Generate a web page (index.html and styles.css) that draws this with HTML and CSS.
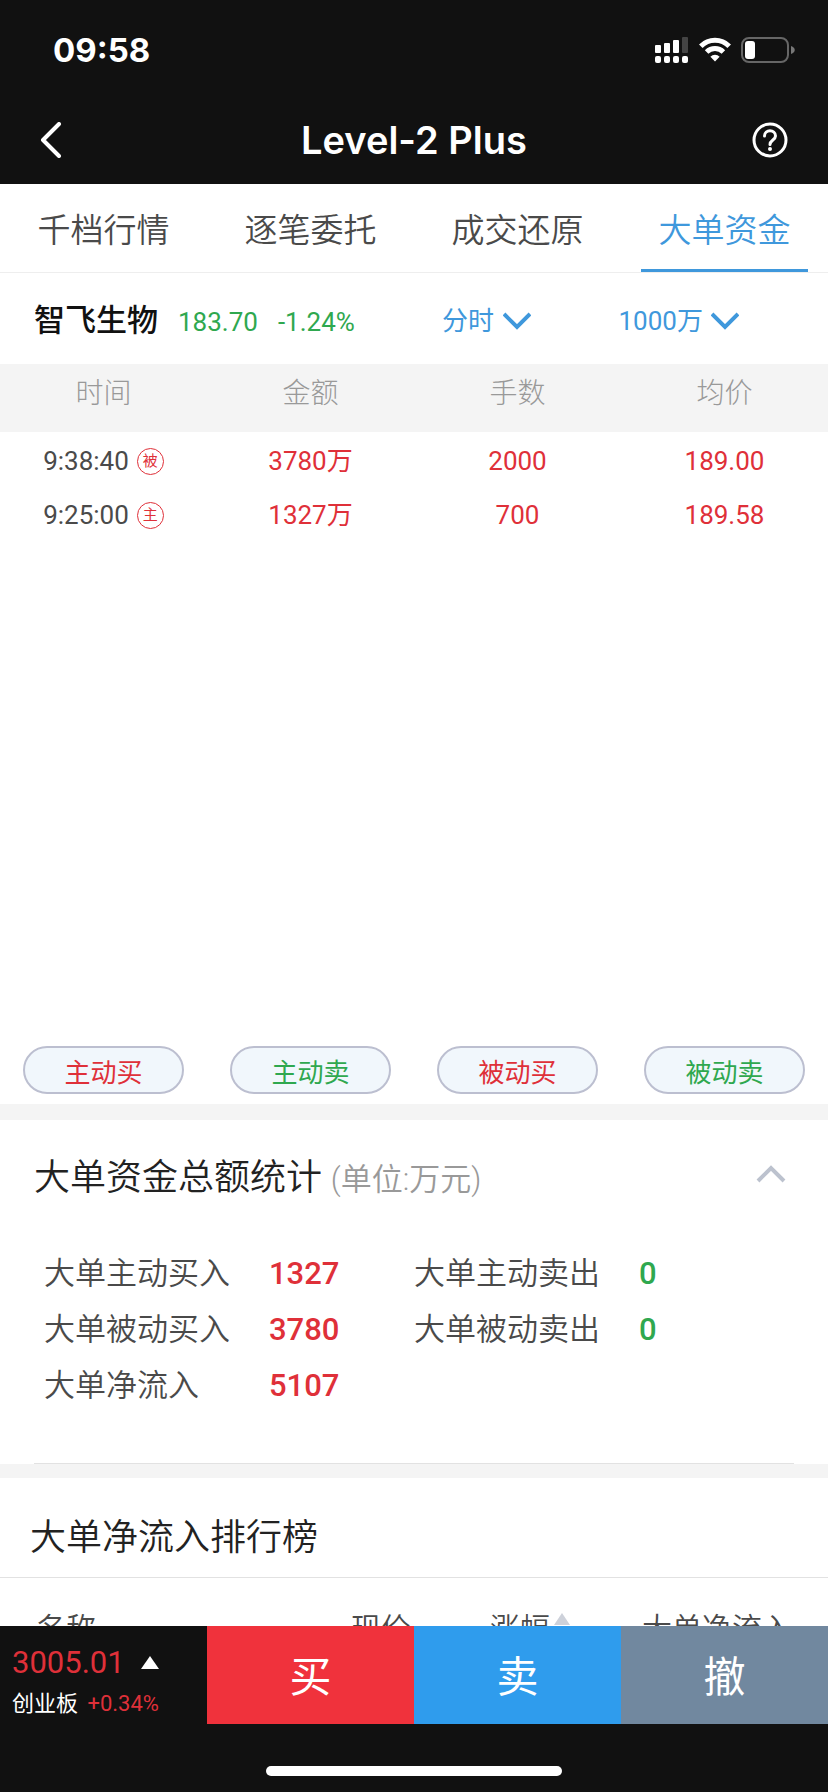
FILE: index.html
```html
<!DOCTYPE html>
<html lang="zh-CN">
<head>
  <meta charset="utf-8">
  <meta name="viewport" content="width=device-width, initial-scale=1">
  <title>Level-2 Plus</title>
  <link rel="stylesheet" href="styles.css">
</head>
<body>
  <header class="header">
    <div class="status-bar">
      <span class="clock">09:58</span>
      <div class="status-icons">
        <svg width="34" height="26" viewBox="0 0 34 26" fill="#fff">
          <rect x="0" y="8" width="6" height="8" rx="1"/>
          <rect x="9" y="6" width="6" height="10" rx="1"/>
          <rect x="18" y="3" width="6" height="13" rx="1"/>
          <rect x="27" y="0" width="6" height="16" rx="1" fill="#444"/>
          <rect x="0" y="19" width="6" height="7" rx="2"/>
          <rect x="9" y="19" width="6" height="7" rx="2"/>
          <rect x="18" y="19" width="6" height="7" rx="2"/>
          <rect x="27" y="19" width="6" height="7" rx="2"/>
        </svg>
        <svg width="32" height="26" viewBox="0 0 32 26" fill="none" stroke="#fff" stroke-width="5">
          <path d="M1.8 9.2a20 20 0 0 1 28.4 0"/>
          <path d="M7.6 15a12 12 0 0 1 16.8 0"/>
          <path d="M16 24.5l-4.6-4.8a6.6 6.6 0 0 1 9.2 0z" fill="#fff" stroke="none"/>
        </svg>
        <svg width="54" height="26" viewBox="0 0 54 26">
          <rect x="1" y="1" width="46" height="24" rx="7" fill="none" stroke="#666" stroke-width="2"/>
          <rect x="4" y="4" width="10" height="18" rx="3" fill="#fff"/>
          <path d="M50 9c5 1.500 5 6.500 0 8z" fill="#777"/>
        </svg>
      </div>
    </div>
    <div class="nav-bar">
      <button class="icon-btn" aria-label="返回">
        <svg width="22" height="36" viewBox="0 0 22 36" fill="none" stroke="#fff" stroke-width="4" stroke-linecap="round" stroke-linejoin="round">
          <path d="M19 2L3 18l16 16"/>
        </svg>
      </button>
      <h1 class="title">Level-2 Plus</h1>
      <button class="icon-btn" aria-label="帮助">
        <svg width="36" height="36" viewBox="0 0 36 36" fill="none" stroke="#fff" stroke-width="3" stroke-linecap="round">
          <circle cx="18" cy="18" r="16"/>
          <path d="M12.500 14c0-7 11-7 11 0 0 4-5.500 4-5.500 8.500"/>
          <circle cx="18" cy="27" r="1" stroke-width="2"/>
        </svg>
      </button>
    </div>
  </header>

  <nav class="tabs">
    <a href="#" class="tab">千档行情</a>
    <a href="#" class="tab">逐笔委托</a>
    <a href="#" class="tab">成交还原</a>
    <a href="#" class="tab active">大单资金</a>
  </nav>

  <main>
    <div class="stock-row">
      <div class="stock">
        <strong class="stock-name">智飞生物</strong>
        <span class="green">183.70</span>
        <span class="green">-1.24%</span>
      </div>
      <div class="picker">
        <select aria-label="周期"><option>分时</option></select>
        <svg width="28" height="18" viewBox="0 0 28 18" fill="none" stroke="#3f98dc" stroke-width="4"><path d="M1 2l13 13L27 2"/></svg>
      </div>
      <div class="picker">
        <select aria-label="大单金额"><option>1000万</option></select>
        <svg width="28" height="18" viewBox="0 0 28 18" fill="none" stroke="#3f98dc" stroke-width="4"><path d="M1 2l13 13L27 2"/></svg>
      </div>
    </div>

    <div class="records">
      <table class="records-table">
        <thead>
          <tr><th>时间</th><th>金额</th><th>手数</th><th>均价</th></tr>
        </thead>
        <tbody>
          <tr>
            <td><div class="time">9:38:40<span class="mark">被</span></div></td>
            <td class="red">3780万</td>
            <td class="red">2000</td>
            <td class="red">189.00</td>
          </tr>
          <tr>
            <td><div class="time">9:25:00<span class="mark">主</span></div></td>
            <td class="red">1327万</td>
            <td class="red">700</td>
            <td class="red">189.58</td>
          </tr>
        </tbody>
      </table>
    </div>

    <div class="filters">
      <button class="filter red">主动买</button>
      <button class="filter green">主动卖</button>
      <button class="filter red">被动买</button>
      <button class="filter green">被动卖</button>
    </div>

    <section class="summary">
      <div class="section-head">
        <h2>大单资金总额统计 <small>(单位:万元)</small></h2>
        <button class="icon-btn" aria-label="收起">
          <svg width="30" height="18" viewBox="0 0 30 18" fill="none" stroke="#bcc2ce" stroke-width="4"><path d="M2 16L15 3l13 13"/></svg>
        </button>
      </div>
      <dl class="stats">
        <dt>大单主动买入</dt><dd class="red">1327</dd>
        <dt>大单主动卖出</dt><dd class="green">0</dd>
        <dt>大单被动买入</dt><dd class="red">3780</dd>
        <dt>大单被动卖出</dt><dd class="green">0</dd>
        <dt>大单净流入</dt><dd class="red">5107</dd>
      </dl>
    </section>

    <section class="ranking">
      <h2>大单净流入排行榜</h2>
      <table class="ranking-table">
        <thead>
          <tr>
            <th class="col-name">名称</th>
            <th class="col-price">现价</th>
            <th class="col-change">涨幅<svg class="sort" width="16" height="12" viewBox="0 0 16 12" fill="#cdd1da"><path d="M8 0l8 12H0z"/></svg></th>
            <th class="col-flow">大单净流入</th>
          </tr>
        </thead>
      </table>
    </section>
  </main>

  <footer class="footer">
    <div class="trade-bar">
      <div class="index">
        <div class="index-price">3005.01
          <svg width="18" height="13" viewBox="0 0 18 13" fill="#fff"><path d="M9 0l9 13H0z"/></svg>
        </div>
        <div class="index-info">创业板 <span>+0.34%</span></div>
      </div>
      <button class="trade buy">买</button>
      <button class="trade sell">卖</button>
      <button class="trade cancel">撤</button>
    </div>
    <div class="home-indicator"></div>
  </footer>
</body>
</html>
```
FILE: styles.css
```css
:root {
  --dark: #111111;
  --red: #df3039;
  --green: #2fa84f;
  --blue: #3f98dc;
  --surface: #f4f4f4;
  --border: #e2e2e2;
  --text: #4a4a4a;
}

* {
  box-sizing: border-box;
}

body {
  margin: 0;
  background: #fff;
  color: var(--text);
  font-family: Roboto, "Noto Sans CJK SC", sans-serif;
  font-size: 26px;
}

button,
select {
  font: inherit;
  color: inherit;
  background: none;
  border: none;
  padding: 0;
  margin: 0;
  cursor: pointer;
}

svg {
  display: block;
  flex: none;
}

.red {
  color: var(--red);
}

.green {
  color: var(--green);
}

/* Header */
.header {
  background: var(--dark);
  color: #fff;
  font-family: Inter, sans-serif;
}

.status-bar {
  height: 96px;
  padding: 4px 33px 0 53px;
  display: flex;
  align-items: center;
  justify-content: space-between;
}

.clock {
  font-size: 33px;
  font-weight: 700;
}

.status-icons {
  display: flex;
  gap: 10px;
}

.nav-bar {
  height: 88px;
  padding: 0 40px;
  display: grid;
  grid-template-columns: 36px 1fr 36px;
  align-items: center;
}

.title {
  margin: 0;
  text-align: center;
  font-size: 38px;
  font-weight: 600;
}

/* Tabs */
.tabs {
  display: grid;
  grid-template-columns: repeat(4, 1fr);
  border-bottom: 1px solid #eee;
}

.tab {
  height: 88px;
  margin: 0 20px;
  line-height: 94px;
  text-align: center;
  font-size: 33px;
  font-weight: 350;
  color: var(--text);
  text-decoration: none;
  white-space: nowrap;
}

.tab.active {
  color: var(--blue);
  border-bottom: 3px solid var(--blue);
}

/* Stock row */
.stock-row {
  height: 91px;
  padding: 4px 0 0 34px;
  display: grid;
  grid-template-columns: 37fr 16fr 19fr;
  align-items: center;
}

.stock {
  display: flex;
  align-items: baseline;
  gap: 20px;
}

.stock-name {
  font-size: 31px;
  line-height: 44px;
  font-weight: 500;
  color: #111;
}

.picker {
  display: flex;
  align-items: center;
  gap: 8px;
  color: var(--blue);
}

.picker select {
  appearance: none;
}

/* Records */
.records {
  min-height: 676px;
}

.records-table,
.ranking-table {
  width: 100%;
  table-layout: fixed;
  border-collapse: collapse;
}

.records-table th {
  height: 68px;
  padding: 0 0 14px;
  background: var(--surface);
  color: #999;
  font-size: 28px;
  font-weight: 300;
}

.records-table td {
  height: 54px;
  padding: 4px 0 0;
  line-height: 30px;
  text-align: center;
}

.time {
  display: flex;
  align-items: center;
  justify-content: center;
  gap: 8px;
}

.mark {
  width: 27px;
  height: 27px;
  border: 1px solid var(--red);
  border-radius: 50%;
  color: var(--red);
  font-size: 15px;
  line-height: 25px;
}

/* Filters */
.filters {
  display: grid;
  grid-template-columns: repeat(4, 1fr);
  padding: 6px 0 10px;
}

.filter {
  height: 48px;
  margin: 0 23px;
  background: #f1f7fc;
  border: 2px solid #bcbfd0;
  border-radius: 24px;
}

/* Summary */
.summary {
  border-top: 16px solid var(--surface);
  border-bottom: 14px solid var(--surface);
}

.section-head {
  padding: 0 42px 0 34px;
  height: 108px;
  display: flex;
  align-items: center;
  justify-content: space-between;
}

h2 {
  margin: 0;
  font-size: 36px;
  font-weight: 350;
  color: #222;
}

h2 small {
  font-size: 31px;
  color: #999;
}

.stats {
  margin: 0 34px;
  padding: 18px 10px 49px;
  display: grid;
  grid-template-columns: 3fr 2fr 3fr 2fr;
  border-bottom: 1px solid var(--border);
  font-size: 31px;
  line-height: 56px;
  white-space: nowrap;
}

.stats dt {
  font-weight: 350;
}

.stats dd {
  margin: 0;
  padding-left: 3px;
  font-weight: 500;
}

/* Ranking */
.ranking h2 {
  height: 100px;
  padding: 0 30px;
  line-height: 120px;
  border-bottom: 1px solid var(--border);
}

.ranking-table th {
  height: 96px;
  padding: 0;
  font-size: 30px;
  font-weight: 350;
}

.ranking-table .col-name {
  width: 37%;
  padding-left: 36px;
  text-align: left;
}

.col-price {
  width: 18%;
}

.col-change {
  width: 18%;
}

.ranking-table .col-flow {
  padding-right: 36px;
  text-align: right;
}

.sort {
  display: inline-block;
  margin-left: 4px;
  vertical-align: 14px;
}

/* Footer */
.footer {
  position: fixed;
  left: 0;
  right: 0;
  bottom: 0;
  background: var(--dark);
}

.trade-bar {
  height: 98px;
  display: grid;
  grid-template-columns: repeat(4, 1fr);
}

.index {
  padding-left: 12px;
}

.index-price {
  display: flex;
  align-items: center;
  gap: 16px;
  height: 60px;
  padding-top: 12px;
  font-size: 31px;
  color: var(--red);
}

.index-info {
  font-size: 22px;
  line-height: 36px;
  color: #fff;
}

.index-info span {
  margin-left: 4px;
  color: var(--red);
}

.trade {
  padding-bottom: 4px;
  color: #fff;
  font-size: 42px;
}

.buy {
  background: #f0323c;
}

.sell {
  background: #2f9ced;
}

.cancel {
  background: #71889f;
}

.home-indicator {
  width: 296px;
  height: 10px;
  margin: 42px auto 16px;
  border-radius: 5px;
  background: #fff;
}
```
